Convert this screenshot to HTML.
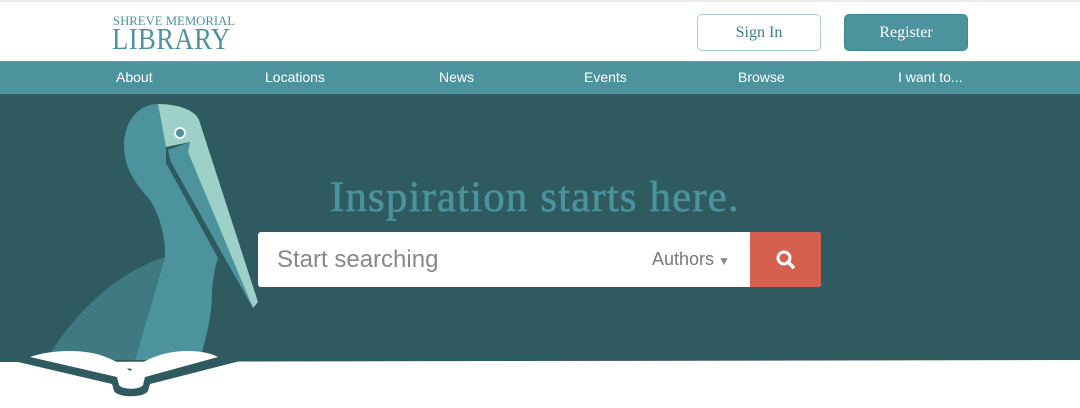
<!DOCTYPE html>
<html><head><style>
*{margin:0;padding:0;box-sizing:border-box}
body{width:1080px;height:408px;overflow:hidden;background:#fff;position:relative;font-family:"Liberation Sans",sans-serif}
.top{position:absolute;left:0;top:0;width:1080px;height:61px;background:#fff;border-top:2px solid #eee}
.logo1{position:absolute;left:113px;top:11px;font:13px "Liberation Serif",serif;color:#4d939e;white-space:nowrap;transform:scaleX(0.98);transform-origin:left}
.logo2{position:absolute;left:112px;top:19px;font:31px "Liberation Serif",serif;color:#4d939e;white-space:nowrap;transform:scaleX(0.86);transform-origin:left;letter-spacing:0.5px}
.btn{position:absolute;top:12px;width:124px;height:37px;border-radius:5px;font:16px "Liberation Serif",serif;text-align:center;line-height:35px}
.si{left:697px;border:1.5px solid #a8cdd3;color:#3f7f89}
.rg{left:844px;background:#4d939e;color:#fff;border:1px solid #3d8892}
.nav{position:absolute;left:0;top:61px;width:1080px;height:33px;background:#4d939e;border-top:1px solid #5fa0aa}
.nav span{position:absolute;top:7px;color:#fff;font-size:14px}
.hero{position:absolute;left:0;top:94px;width:1080px;height:265px;background:#2f5a60}
h1{position:absolute;left:330px;top:173px;font:normal 43px "Liberation Serif",serif;color:#4a929c;letter-spacing:1.1px;white-space:nowrap;-webkit-text-stroke:0.6px #4a929c}
.sb{position:absolute;left:258px;top:232px;width:563px;height:55px;background:#fff;border-radius:3px;overflow:hidden}
.sb .ph{position:absolute;left:19px;top:14px;font-size:24px;color:#888}
.sb .au{position:absolute;left:394px;top:17px;font-size:18px;color:#777}
.sb .bt{position:absolute;right:0;top:0;width:71px;height:55px;background:#d66050}
</style></head><body>
<div class="top">
<div class="logo1">SHREVE MEMORIAL</div>
<div class="logo2">LIBRARY</div>
<div class="btn si">Sign In</div>
<div class="btn rg">Register</div>
</div>
<div class="nav">
<span style="left:116px">About</span>
<span style="left:265px">Locations</span>
<span style="left:439px">News</span>
<span style="left:584px">Events</span>
<span style="left:738px">Browse</span>
<span style="left:898px">I want to...</span>
</div>
<div class="hero"></div>
<svg style="position:absolute;left:0;top:0" width="1080" height="408">
<path d="M0 358 L1080 358 L1080 360 L0 362Z" fill="#2f5a60"/>
<path d="M158 104 L166 147 L166 163 L218 258 C214 270 213 280 212 290 C212 320 205 340 200 360 L135 360 L165 257 C166 240 160 215 150 200 C132 180 124 165 124 145 C124 120 140 104 158 104Z" fill="#4d939e"/>
<path d="M165 257 C110 275 70 320 46 360 L135 360 Z" fill="#3f7a82"/>
<path d="M171 162 L168 150 L190 142 L188 152 L255 305 L250 303 Z" fill="#4d939e"/>
<path d="M158 104 C178 104 195 110 199 120 L258 302 L253 308 L188 152 L190 142 L166 147 Z" fill="#9dd0c8"/>
<circle cx="180" cy="133" r="5" fill="#4d939e" stroke="#fff" stroke-width="1.8"/>
<path d="M18 362 L112 384 L114 391 C118 398 144 398 148 391 L150 384 L248 359 L230 354 L140 370 L25 354 Z" fill="#2f5a60"/>
<path d="M30 357 C50 350 80 349 100 355 C115 360 125 366 130 371 C135 366 145 360 160 355 C180 349 205 350 218 357 L145 377 L143 385 C140 390 122 390 119 385 L117 377 Z" fill="#fff"/>
</svg>
<h1>Inspiration starts here.</h1>
<div class="sb">
<div class="ph">Start searching</div>
<div class="au">Authors<span style="font-size:12px;color:#888;margin-left:4px">&#9660;</span></div>
<div class="bt"><svg width="71" height="55"><circle cx="34" cy="26" r="6" fill="none" stroke="#fff" stroke-width="3"/><path d="M38 30 L43 35" stroke="#fff" stroke-width="3.5" stroke-linecap="round"/></svg></div>
</div>
</body></html>
